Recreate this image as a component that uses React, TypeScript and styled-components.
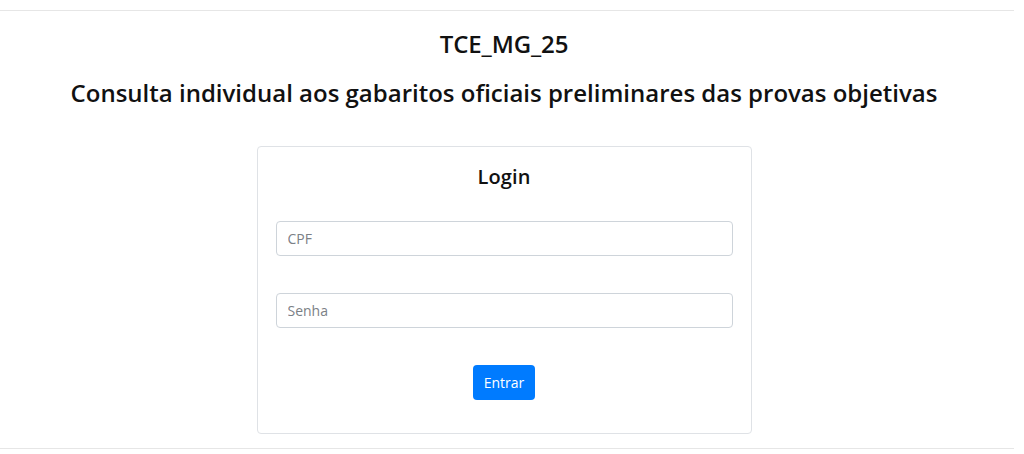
import React from "react";
import styled, { createGlobalStyle } from "styled-components";

const GlobalStyle = createGlobalStyle`
  html, body {
    margin: 0;
    padding: 0;
    background: #ffffff;
  }
  body {
    font-family: "Open Sans", "Noto Sans", "Liberation Sans", sans-serif;
    color: #212529;
  }
  * { box-sizing: border-box; }
`;

const Page = styled.div`
  width: 1008px;
  display: flex;
  flex-direction: column;
  align-items: center;
`;

const Rule = styled.div<{ $top?: boolean }>`
  align-self: stretch;
  width: 1014px;
  height: 0;
  border-top: 1px solid #e6e6e6;
  margin-top: ${(p) => (p.$top ? "10px" : "14px")};
`;

const Title = styled.h1`
  margin: 19px 0 0;
  font-size: 24px;
  line-height: 28px;
  font-weight: 600;
  color: #111;
  letter-spacing: -0.1px;
`;

const Subtitle = styled.h2`
  margin: 21px 0 0;
  font-size: 24px;
  line-height: 28px;
  font-weight: 600;
  color: #111;
  letter-spacing: 0;
`;

const Card = styled.form`
  margin-top: 39px;
  width: 495px;
  border: 1px solid #dfe2e6;
  border-radius: 4px;
  padding: 18px 18px 33px;
  display: flex;
  flex-direction: column;
  align-items: stretch;
`;

const CardTitle = styled.h3`
  margin: 0 0 32px;
  text-align: center;
  font-size: 20px;
  line-height: 24px;
  font-weight: 600;
  color: #111;
  letter-spacing: 0.1px;
`;

const Input = styled.input`
  height: 35px;
  width: 100%;
  border: 1px solid #ced4da;
  border-radius: 4px;
  padding: 0 11px;
  font-family: inherit;
  font-size: 14px;
  color: #495057;
  margin-bottom: 37px;
  outline: none;
  &::placeholder {
    color: #7b8086;
  }
`;

const Actions = styled.div`
  display: flex;
  justify-content: center;
`;

const Button = styled.button`
  height: 35px;
  padding: 0 11px;
  border: none;
  border-radius: 4px;
  background: #007bff;
  color: #ffffff;
  font-family: inherit;
  font-size: 14px;
  cursor: pointer;
`;

export default function App() {
  return (
    <>
      <GlobalStyle />
      <Page>
        <Rule $top />
        <Title>TCE_MG_25</Title>
        <Subtitle>
          Consulta individual aos gabaritos oficiais preliminares das provas objetivas
        </Subtitle>
        <Card onSubmit={(e) => e.preventDefault()}>
          <CardTitle>Login</CardTitle>
          <Input type="text" placeholder="CPF" />
          <Input type="password" placeholder="Senha" />
          <Actions>
            <Button type="submit">Entrar</Button>
          </Actions>
        </Card>
        <Rule />
      </Page>
    </>
  );
}
